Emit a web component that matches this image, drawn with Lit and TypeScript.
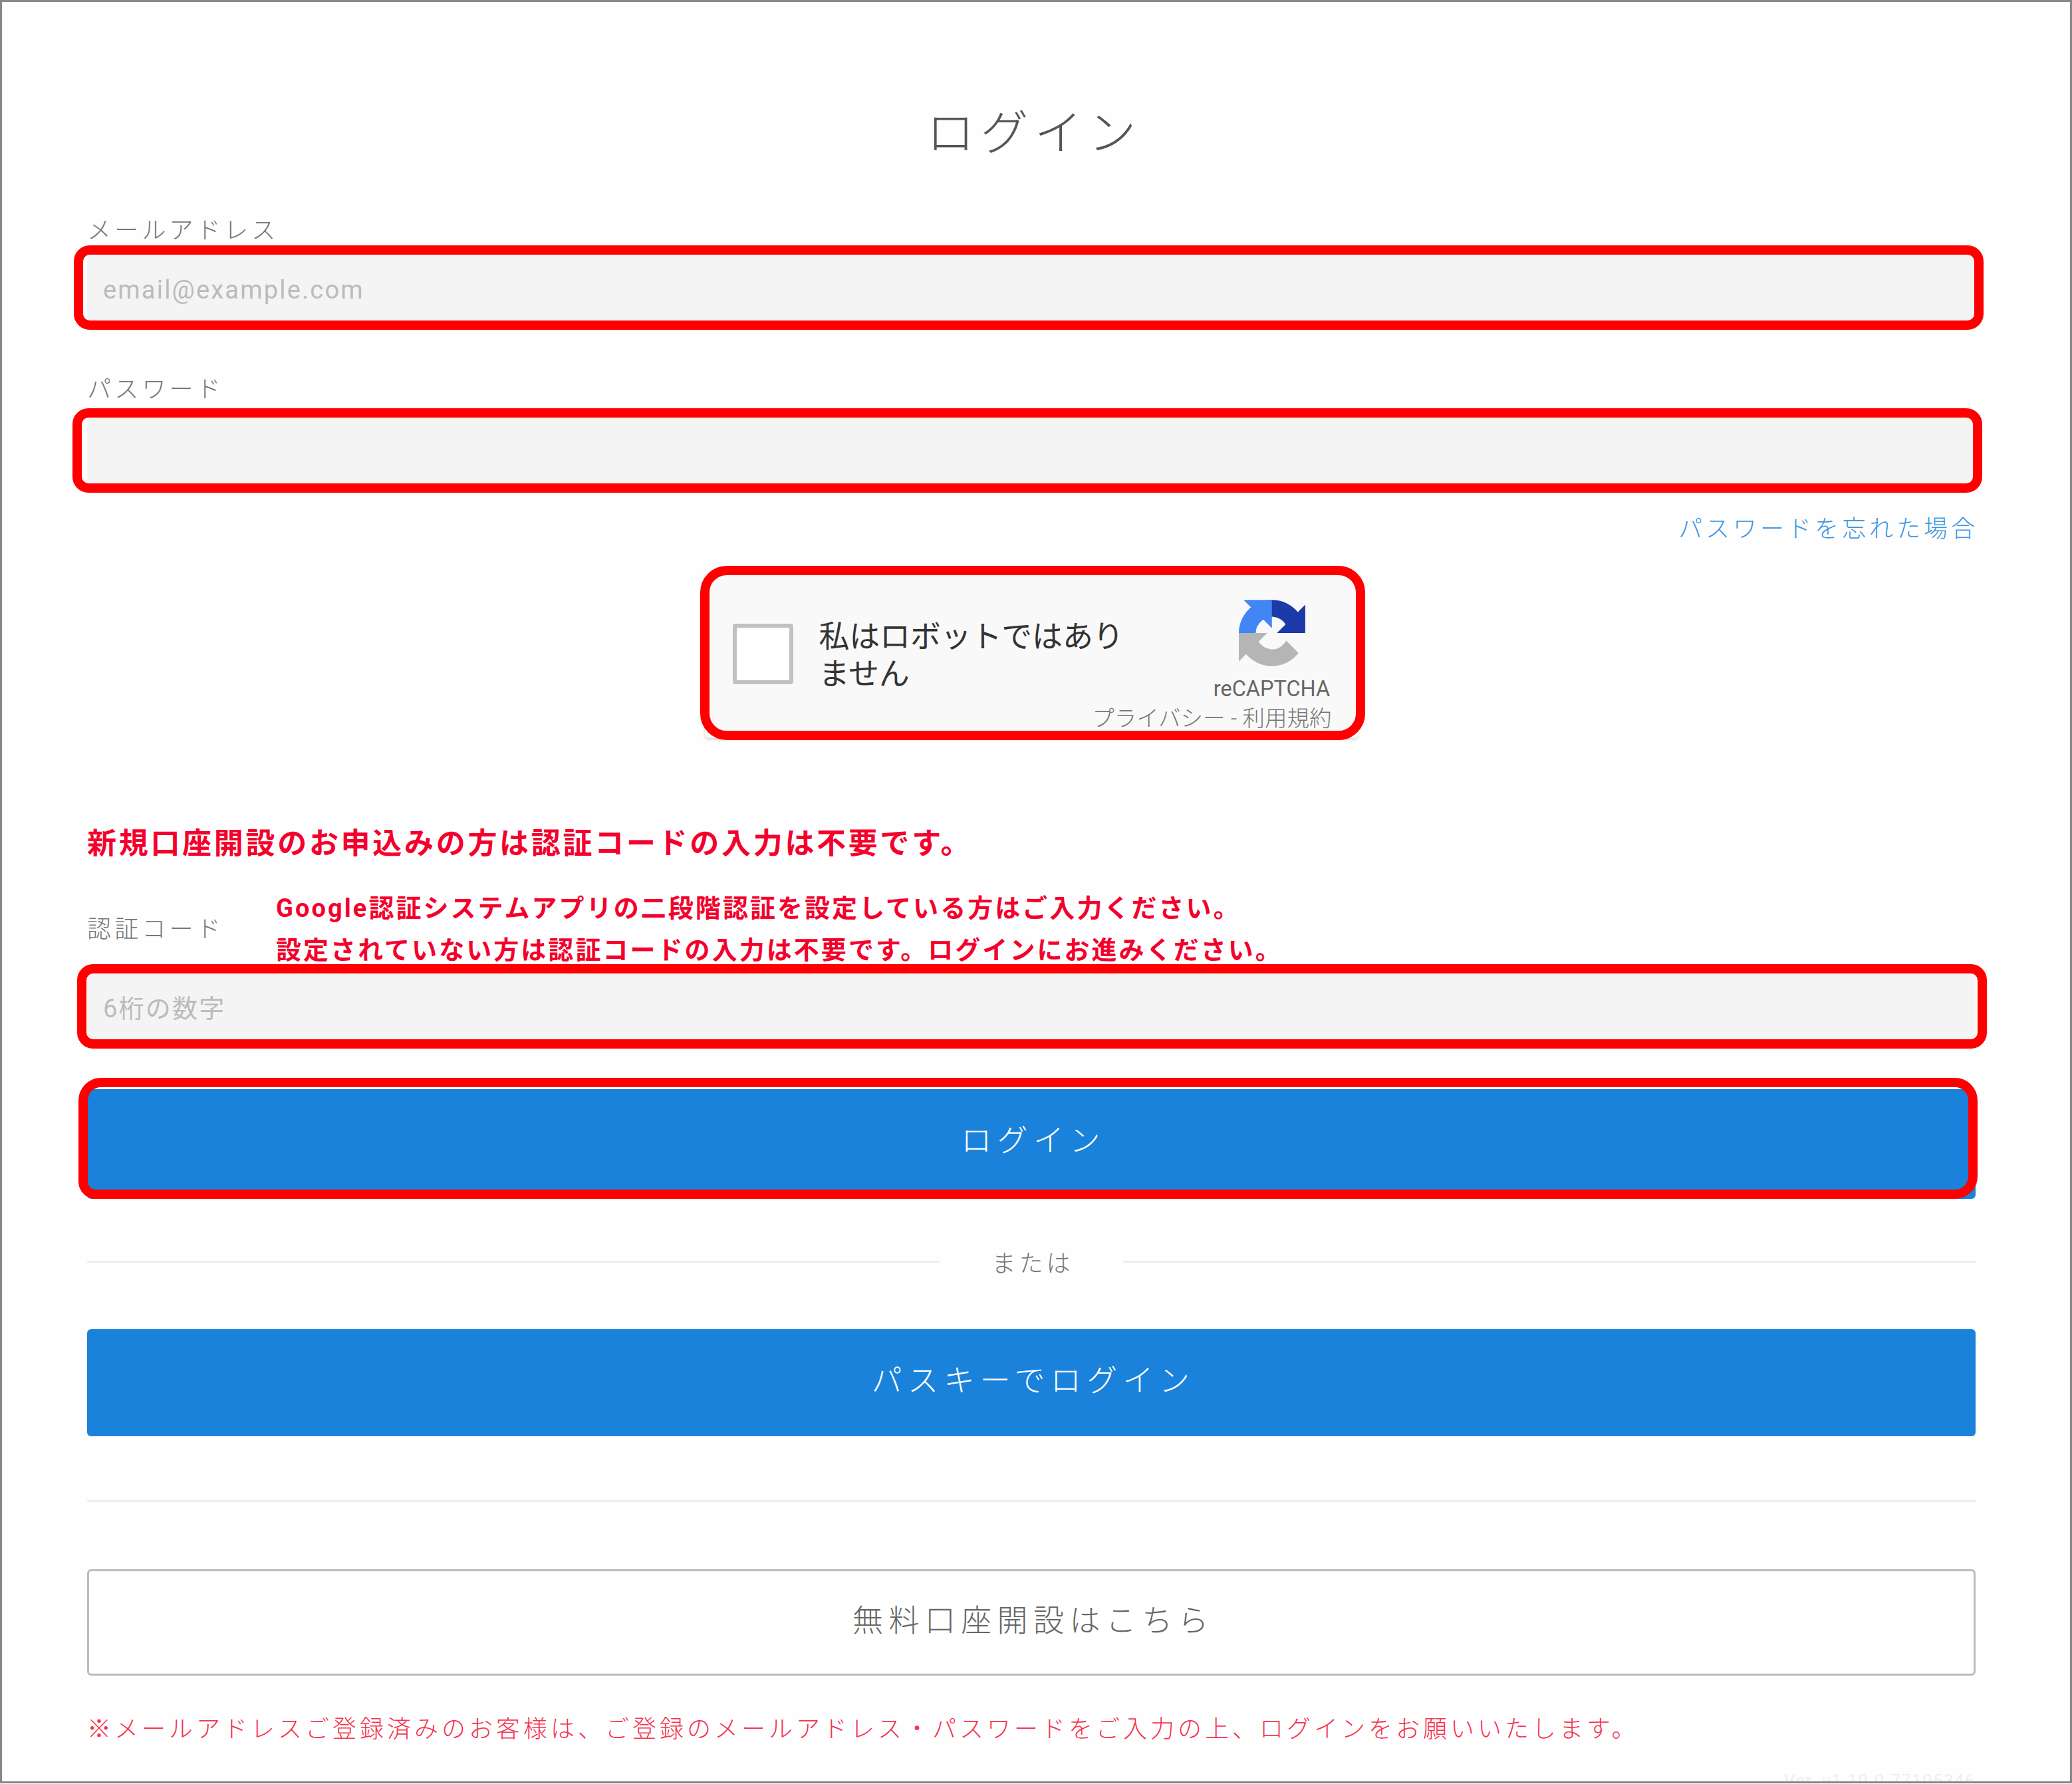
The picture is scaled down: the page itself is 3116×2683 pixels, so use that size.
import { LitElement, html, css } from 'lit';
import { customElement } from 'lit/decorators.js';

@customElement('app-root')
export class AppRoot extends LitElement {
  static styles = css`
    :host {
      display: block;
      background: #fff;
      font-family: Roboto, 'Noto Sans CJK JP', sans-serif;
    }
    .frame {
      box-sizing: border-box;
      width: 3116px;
      height: 2682px;
      border: 3px solid #888;
      background: #fefefe;
      padding: 0 142px 0 128px;
      overflow: hidden;
      display: flex;
      flex-direction: column;
    }
    .frame > * {
      flex-shrink: 0;
    }
    .title {
      margin: 162px 0 0;
      padding-left: 9px;
      font-size: 72px;
      line-height: 72px;
      font-weight: 300;
      letter-spacing: 9px;
      text-align: center;
      color: #555;
    }
    .label {
      font-size: 36px;
      line-height: 44px;
      letter-spacing: 5.2px;
      font-weight: 300;
      color: #777;
    }
    .label-mail {
      margin: 88px 0 14px;
    }
    .label-pass {
      margin: 81px 0 20px;
    }
    .wrap {
      position: relative;
    }
    input {
      display: block;
      box-sizing: border-box;
      width: 100%;
      height: 100px;
      border: none;
      outline: none;
      border-radius: 6px;
      background: #f4f4f4;
      padding: 6px 24px 0;
      font-family: inherit;
      font-size: 38px;
      letter-spacing: 2.2px;
    }
    input::placeholder {
      color: #bbb;
      opacity: 1;
    }
    .mark {
      position: absolute;
      border: 14px solid #f00;
      border-radius: 24px;
      pointer-events: none;
    }
    .m-mail {
      left: -20px;
      right: -12px;
      top: -14px;
      bottom: -13px;
    }
    .m-pass {
      left: -22px;
      right: -10px;
      top: -14px;
      bottom: -13px;
    }
    .m-code {
      left: -15px;
      right: -17px;
      top: -14px;
      bottom: -13px;
    }
    .m-login {
      left: -13px;
      right: -3px;
      top: -17px;
      bottom: 0;
      border-radius: 34px 34px 34px 26px;
    }
    .m-captcha {
      left: -7px;
      right: -10px;
      top: -9px;
      bottom: -3px;
      border-radius: 40px;
    }
    .forgot {
      margin: 46px -4px 0 0;
      align-self: flex-end;
      font-size: 36px;
      line-height: 44px;
      letter-spacing: 5px;
      font-weight: 300;
      color: #3d97e3;
      text-decoration: none;
    }
    .captcha {
      box-sizing: border-box;
      align-self: center;
      width: 983px;
      height: 250px;
      margin-top: 42px;
    }
    .captcha-box {
      box-sizing: border-box;
      height: 100%;
      background: #f9f9f9;
      border-radius: 6px;
      box-shadow: 0 2px 4px rgba(0, 0, 0, 0.18);
      padding: 42px 40px 9px 42px;
      display: grid;
      grid-template-columns: 91px 1fr 178px;
      grid-template-rows: 1fr auto;
      column-gap: 39px;
    }
    .check {
      grid-column: 1;
      grid-row: 1 / 3;
      align-self: center;
      box-sizing: border-box;
      width: 91px;
      height: 91px;
      margin-top: -37px;
      background: #fff;
      border: 6px solid #c1c1c1;
      border-radius: 4px;
    }
    .robot {
      grid-column: 2;
      grid-row: 1 / 3;
      align-self: center;
      margin-top: -33px;
      width: 480px;
      font-size: 46px;
      line-height: 56px;
      letter-spacing: -0.2px;
      color: #333;
    }
    .brand {
      grid-column: 3;
      grid-row: 1;
      margin-left: -2px;
      display: flex;
      flex-direction: column;
      align-items: center;
    }
    .brand svg {
      display: block;
      width: 100px;
      height: 100px;
    }
    .brand span {
      margin-top: 14px;
      font-size: 32.5px;
      line-height: 40px;
      color: #666;
    }
    .terms {
      grid-column: 2 / 4;
      grid-row: 2;
      justify-self: end;
      font-size: 33.5px;
      line-height: 40px;
      font-weight: 300;
      color: #777;
    }
    .notice {
      margin-top: 131px;
      font-size: 44px;
      line-height: 56px;
      font-weight: 700;
      letter-spacing: 3.7px;
      color: #f5002c;
    }
    .code-row {
      margin-top: 38px;
      margin-bottom: 3px;
      display: flex;
      align-items: center;
    }
    .code-row .label {
      width: 284px;
      flex: none;
    }
    .code-note {
      font-size: 38px;
      line-height: 63px;
      font-weight: 700;
      letter-spacing: 3.05px;
      color: #f5002c;
    }
    .btn {
      display: block;
      box-sizing: border-box;
      width: 100%;
      border: none;
      border-radius: 6px;
      background: #1a82db;
      color: #fff;
      font-family: inherit;
      font-size: 46px;
      font-weight: 300;
      letter-spacing: 8.4px;
      padding: 0 0 16px 6px;
    }
    .login {
      height: 165px;
      padding-bottom: 20px;
    }
    .login-wrap {
      margin-top: 74px;
    }
    .or {
      margin-top: 72px;
      display: flex;
      align-items: center;
      font-size: 36px;
      line-height: 44px;
      letter-spacing: 5px;
      font-weight: 300;
      color: #777;
    }
    .or i {
      flex: 1;
      height: 3px;
      background: #eee;
    }
    .or span {
      width: 276px;
      padding: 4px 0 0 4px;
      margin-bottom: -4px;
      box-sizing: border-box;
      text-align: center;
    }
    .passkey {
      height: 161px;
      margin-top: 80px;
    }
    .rule {
      height: 3px;
      margin-top: 96px;
      background: #eee;
    }
    .open {
      height: 160px;
      margin-top: 101px;
      padding-bottom: 14px;
      background: #fff;
      border: 3px solid #bbb;
      color: #666;
    }
    .foot {
      margin-top: 59px;
      font-size: 36px;
      line-height: 44px;
      letter-spacing: 5px;
      font-weight: 300;
      color: #f5334f;
    }
    .ver {
      margin-top: 33px;
      align-self: flex-end;
      font-size: 26px;
      line-height: 44px;
      letter-spacing: 1.4px;
      color: #eee;
    }
  `;

  render() {
    return html`
      <div class="frame">
        <h1 class="title">ログイン</h1>

        <div class="label label-mail">メールアドレス</div>
        <div class="wrap">
          <input type="text" placeholder="email@example.com" />
          <div class="mark m-mail"></div>
        </div>

        <div class="label label-pass">パスワード</div>
        <div class="wrap">
          <input type="password" />
          <div class="mark m-pass"></div>
        </div>

        <a class="forgot" href="#">パスワードを忘れた場合</a>

        <div class="captcha wrap">
          <div class="captcha-box">
            <div class="check"></div>
            <div class="robot">私はロボットではありません</div>
            <div class="brand">
              <svg viewBox="0 0 64 64">
                <path
                  fill="#1c3aa9"
                  d="M64 31.955l-.033-1.37V4.687l-7.16 7.16C50.948 4.674 42.033.093 32.05.093c-10.4 0-19.622 4.96-25.458 12.64l11.736 11.86a15.55 15.55 0 0 1 4.754-5.334c2.05-1.6 4.952-2.906 8.968-2.906.485 0 .86.057 1.135.163 4.976.393 9.288 3.14 11.828 7.124l-8.307 8.307 26.28-.001"
                />
                <path
                  fill="#4285f4"
                  d="M31.862.094l-1.37.033H4.594l7.16 7.16C4.58 13.147 0 22.06 0 32.046c0 10.4 4.96 19.622 12.64 25.458l11.86-11.736a15.55 15.55 0 0 1-5.334-4.754c-1.6-2.05-2.906-4.952-2.906-8.968 0-.485.057-.86.163-1.135.393-4.976 3.14-9.288 7.124-11.828l8.307 8.307.001-26.28"
                />
                <path
                  fill="#b5b5b5"
                  d="M.001 32.045l.033 1.37v25.898l7.16-7.16c5.86 7.173 14.774 11.754 24.76 11.754 10.4 0 19.622-4.96 25.458-12.64l-11.736-11.86a15.55 15.55 0 0 1-4.754 5.334c-2.05 1.6-4.952 2.906-8.968 2.906-.485 0-.86-.057-1.135-.163-4.976-.393-9.288-3.14-11.828-7.124l8.307-8.307-26.28.001"
                />
              </svg>
              <span>reCAPTCHA</span>
            </div>
            <div class="terms">プライバシー - 利用規約</div>
          </div>
          <div class="mark m-captcha"></div>
        </div>

        <div class="notice">新規口座開設のお申込みの方は認証コードの入力は不要です。</div>

        <div class="code-row">
          <div class="label">認証コード</div>
          <div class="code-note">
            Google認証システムアプリの二段階認証を設定している方はご入力ください。<br />
            設定されていない方は認証コードの入力は不要です。ログインにお進みください。
          </div>
        </div>
        <div class="wrap">
          <input type="text" placeholder="6桁の数字" />
          <div class="mark m-code"></div>
        </div>

        <div class="wrap login-wrap">
          <button class="btn login">ログイン</button>
          <div class="mark m-login"></div>
        </div>

        <div class="or"><i></i><span>または</span><i></i></div>

        <button class="btn passkey">パスキーでログイン</button>

        <div class="rule"></div>

        <button class="btn open">無料口座開設はこちら</button>

        <div class="foot">※メールアドレスご登録済みのお客様は、ご登録のメールアドレス・パスワードをご入力の上、ログインをお願いいたします。</div>

        <div class="ver">Ver. v1.19.0.77105346</div>
      </div>
    `;
  }
}
